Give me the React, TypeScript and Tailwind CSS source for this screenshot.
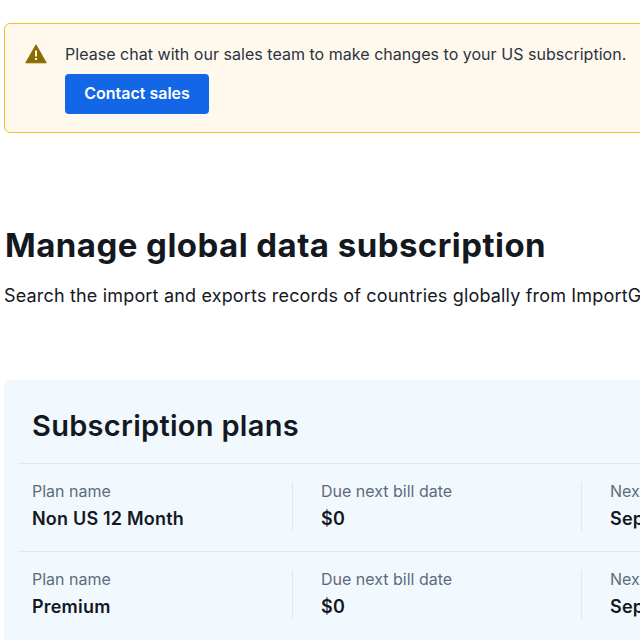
/**
 * Billing page: US subscription notice and global data subscription plans.
 */

import React from "react";

const PLANS = [
  { name: "Non US 12 Month", due: "$0", next: "Sep 12, 2025" },
  { name: "Premium", due: "$0", next: "Sep 12, 2025" },
];

function Field({ label, value, last }: { label: string; value: string; last?: boolean }): React.ReactElement {
  return (
    <div className={last ? "w-[289px] shrink-0 pb-[1px]" : "w-[261px] mr-[28px] shrink-0 pb-[1px] border-r border-[#e2e8f0]"}>
      <div className="text-base leading-[18px] text-[#5f6b7a]">{label}</div>
      <div className="mt-[7px] text-lg leading-6 font-semibold tracking-[0.2px] text-[#14181f]">{value}</div>
    </div>
  );
}

function App(): React.ReactElement {
  return (
    <div className="w-[640px] h-[640px] overflow-hidden bg-white font-['Inter',sans-serif]">
      <div className="w-[1000px] pl-1 pt-[23px]">
        {/* Sales notice */}
        <div className="flex h-[110px] rounded-[6px] border border-[#eec22f] bg-[#fff9ed] pl-5 pt-5">
          <svg width="22" height="20" viewBox="0 0 22 20" className="shrink-0">
            <path d="M11 0.8 L21.2 18.8 H0.8 Z" fill="#8a6d00" stroke="#8a6d00" strokeLinejoin="round" />
            <rect x="10" y="6.5" width="2" height="6" fill="#fff9ed" />
            <rect x="10" y="14" width="2" height="2" fill="#fff9ed" />
          </svg>
          <div className="ml-[18px]">
            <p className="text-base leading-5 tracking-[0.03px] text-[#2b3340]">
              Please chat with our sales team to make changes to your US subscription.
            </p>
            <button className="mt-[10px] h-10 w-[144px] rounded-[4px] bg-[#1366e6] pb-[2px] text-base font-semibold text-white">
              Contact sales
            </button>
          </div>
        </div>

        {/* Page heading */}
        <h1 className="mt-[90px] pl-[1px] text-[33px] leading-11 font-bold tracking-[0.45px] text-[#14181f]">
          Manage global data subscription
        </h1>
        <p className="mt-[17px] text-lg leading-6 tracking-[0.17px] text-[#14181f]">
          Search the import and exports records of countries globally from ImportGenius
        </p>

        {/* Plans */}
        <div className="mt-[72px] rounded-[6px] bg-[#f1f9ff] px-[14px] pb-4">
          <h2 className="pl-[14px] pt-[28px] pb-[19px] text-[29px] leading-9 font-semibold tracking-[0.3px] text-[#14181f]">
            Subscription plans
          </h2>
          {PLANS.map((plan) => (
            <div key={plan.name} className="flex border-t border-[#e2e8f0] pl-[14px] pt-[18px] pb-[19px]">
              <Field label="Plan name" value={plan.name} />
              <Field label="Due next bill date" value={plan.due} />
              <Field label="Next bill date" value={plan.next} last />
            </div>
          ))}
        </div>
      </div>
    </div>
  );
}

export default App;
